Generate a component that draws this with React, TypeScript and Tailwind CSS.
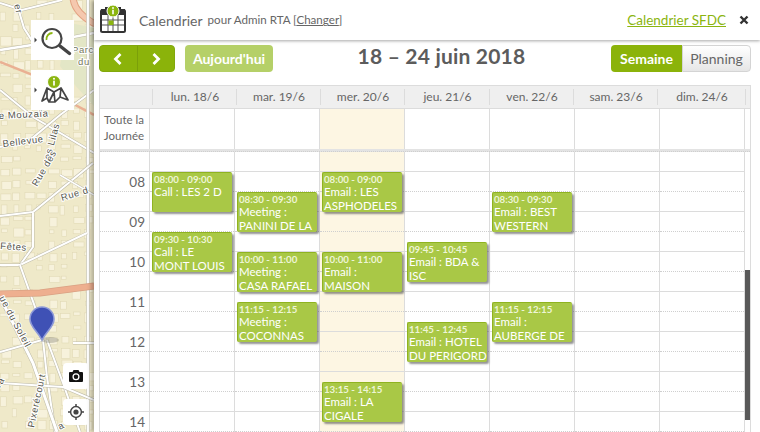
import React from "react";

const days = ["lun. 18/6", "mar. 19/6", "mer. 20/6", "jeu. 21/6", "ven. 22/6", "sam. 23/6", "dim. 24/6"];
const hours = ["08", "09", "10", "11", "12", "13", "14"];

type Ev = { t: string; a: string; b?: string; top: number };
const events: Ev[][] = [
  [
    { t: "08:00 - 09:00", a: "Call : LES 2 D", top: 20 },
    { t: "09:30 - 10:30", a: "Call : LE", b: "MONT LOUIS", top: 80 },
  ],
  [
    { t: "08:30 - 09:30", a: "Meeting :", b: "PANINI DE LA", top: 40 },
    { t: "10:00 - 11:00", a: "Meeting :", b: "CASA RAFAEL", top: 100 },
    { t: "11:15 - 12:15", a: "Meeting :", b: "COCONNAS", top: 150 },
  ],
  [
    { t: "08:00 - 09:00", a: "Email : LES", b: "ASPHODELES", top: 20 },
    { t: "10:00 - 11:00", a: "Email :", b: "MAISON", top: 100 },
    { t: "13:15 - 14:15", a: "Email : LA", b: "CIGALE", top: 230 },
  ],
  [
    { t: "09:45 - 10:45", a: "Email : BDA &", b: "ISC", top: 90 },
    { t: "11:45 - 12:45", a: "Email : HOTEL", b: "DU PERIGORD", top: 170 },
  ],
  [
    { t: "08:30 - 09:30", a: "Email : BEST", b: "WESTERN", top: 40 },
    { t: "11:15 - 12:15", a: "Email :", b: "AUBERGE DE", top: 150 },
  ],
  [],
  [],
];

function hash(a: number, b: number) {
  const x = Math.sin(a * 12.9898 + b * 78.233) * 43758.5453;
  return x - Math.floor(x);
}

function MapArt() {
  const road = (d: string, w = 3) => (
    <g key={d}>
      <path d={d} fill="none" stroke="#bdbaa8" strokeWidth={w + 1} />
      <path d={d} fill="none" stroke="#ffffff" strokeWidth={w} />
    </g>
  );
  const blocks: number[][] = [];
  for (let r = 0; r < 36; r++) {
    for (let c = 0; c < 8; c++) {
      if (hash(r, c) < 0.22) continue;
      const w = 4 + hash(c, r + 3) * 7;
      const h = 3 + hash(c + 5, r) * 7;
      blocks.push([c * 12 + hash(r + 1, c) * 2, r * 12 + hash(r, c + 2) * 2, w, h]);
    }
  }
  return (
    <svg width="94" height="432" viewBox="0 0 94 432" className="absolute inset-0">
      <rect width="94" height="432" fill="#efe9c9" />
      {blocks.map((b, i) => (
        <rect key={i} x={b[0]} y={b[1]} width={b[2]} height={b[3]} fill="#f7f2dc" stroke="#e1dab6" strokeWidth="0.6" />
      ))}
      <path d="M66 22 L94 28 L94 106 L74 84 L60 66 Z" fill="#e3e6c6" />
      <path d="M73 -2 C74 8 82 17 95 24" fill="none" stroke="#e2a283" strokeWidth="7" />
      <path d="M73 -2 C74 8 82 17 95 24" fill="none" stroke="#f5c8ae" strokeWidth="5" />
      <path d="M0 62 L33 75 L66 100 L94 115" fill="none" stroke="#eab093" strokeWidth="2.5" />
      {road("M0 50 L32 45 L94 33", 2.5)}
      {road("M0 3 L22 10 L62 0", 2)}
      {road("M18 8 L24 28 L36 47", 2)}
      {road("M0 90 L33 117 L94 153", 2)}
      {road("M0 147 L30 140 L60 115 L94 90", 2)}
      {road("M88 0 L88 432", 2.5)}
      {road("M93 163 L60 190 L33 212 L0 216", 2)}
      {road("M33 213 L33 247 L20 265", 2)}
      {road("M60 175 L94 195", 1.5)}
      {road("M0 265 L20 265 L87 233", 2)}
      {road("M20 265 L35 307 L42 340", 2)}
      {road("M43 340 L47 377 L55 432", 2)}
      {road("M47 340 L63 383 L80 432", 2)}
      {road("M0 297 L33 363 L57 432", 3)}
      {road("M42 340 L0 352", 2)}
      {road("M0 383 L63 387 L94 400", 2)}
      {road("M73 343 L94 343", 2)}
      <path d="M0 294 L40 293 L94 286" fill="none" stroke="#d9a183" strokeWidth="7" />
      <path d="M0 294 L40 293 L94 286" fill="none" stroke="#eeaf8f" strokeWidth="5.5" />
      <g fill="#55554b" fontFamily="'Liberation Sans', sans-serif" fontSize="9.5" letterSpacing="0.6" stroke="#ffffff" strokeWidth="2" paintOrder="stroke">
        <text x="-1" y="119" transform="rotate(-3 0 119)">e Mouzaïa</text>
        <text x="3" y="147" transform="rotate(-7 3 147)">Bellevue</text>
        <text x="50" y="160" transform="rotate(-75 50 160)">es Lilas</text>
        <text x="37" y="187" transform="rotate(-60 37 187)">Rue des</text>
        <text x="62" y="201" transform="rotate(-17 62 201)">Rue d</text>
        <text x="0" y="249" transform="rotate(4 0 249)">Fêtes</text>
        <text x="-1" y="298" transform="rotate(62 -1 298)">ue du Soleil</text>
        <text x="34" y="428" transform="rotate(-78 34 428)">Pixerécourt</text>
        <text x="0" y="388" transform="rotate(-60 0 388)">ra</text>
        <text x="14" y="5" transform="rotate(75 14 5)">er</text>
        <text x="60" y="430" transform="rotate(-30 60 430)">a</text>
        <text x="72" y="53" fill="#76785c">Parc</text>
        <text x="78" y="65" fill="#76785c">du</text>
      </g>
      <ellipse cx="50" cy="340" rx="9" ry="3" fill="#77776e" opacity="0.35" />
      <path d="M42 340 C37 330 30 327 30 319 A12 12 0 0 1 54 319 C54 327 47 330 42 340 Z" fill="#3f51b5" stroke="#8e9ad8" strokeWidth="1.6" />
    </svg>
  );
}

function SideButton({ children }: { children: React.ReactNode }) {
  return <div className="w-[43px] h-10 bg-white flex items-center justify-center">{children}</div>;
}

function InfoDot({ cx, cy, r }: { cx: number; cy: number; r: number }) {
  return (
    <g>
      <circle cx={cx} cy={cy} r={r} fill="#8bb50f" stroke="#ffffff" strokeWidth="1" />
      <circle cx={cx} cy={cy - r * 0.5} r={r * 0.15} fill="#fff" />
      <rect x={cx - r * 0.13} y={cy - r * 0.2} width={r * 0.26} height={r * 0.75} fill="#fff" />
    </g>
  );
}

export default function App() {
  return (
    <div className="relative flex w-[760px] h-[432px] overflow-hidden bg-white font-['Lato','Open_Sans',sans-serif] text-[#555]">
      <div className="relative w-[94px] shrink-0">
        <MapArt />
        <div className="absolute left-[31px] top-5 flex flex-col gap-2.5">
          <SideButton>
            <svg width="43" height="40" viewBox="0 0 43 40">
              <path d="M6 20 L3.5 17.5 V22.5 Z" fill="#444" />
              <circle cx="21" cy="18.5" r="9.5" fill="none" stroke="#444" strokeWidth="2.2" />
              <path d="M15.5 20 A6 6 0 0 1 21.5 13" fill="none" stroke="#8bb50f" strokeWidth="1.8" />
              <path d="M29 26 L38.5 33.5" stroke="#444" strokeWidth="3.4" strokeLinecap="round" />
            </svg>
          </SideButton>
          <SideButton>
            <svg width="43" height="40" viewBox="0 0 43 40">
              <path d="M6 20 L3.5 17.5 V22.5 Z" fill="#444" />
              <path d="M11 31 L16 18 L23 22 L30 18 L37 30 L29 27 L24 32 L18 32 L16 28 Z M16 18 L16 28 M23 22 L24 32 M23 22 L18 32 M30 18 L29 27" fill="none" stroke="#444" strokeWidth="1.7" strokeLinejoin="round" />
              <InfoDot cx={23} cy={12} r={6.5} />
            </svg>
          </SideButton>
        </div>
        <div className="absolute left-[63px] top-[363px] flex flex-col gap-2.5">
          <div className="w-[26px] h-[26px] bg-white rounded flex items-center justify-center">
            <svg width="14" height="12" viewBox="0 0 14 12">
              <path d="M0 3 Q0 2 1 2 H3.5 L4.5 0 H9.5 L10.5 2 H13 Q14 2 14 3 V11 Q14 12 13 12 H1 Q0 12 0 11 Z" fill="#111" />
              <circle cx="7" cy="6.8" r="2.9" fill="#111" stroke="#fff" strokeWidth="1.3" />
            </svg>
          </div>
          <div className="w-[26px] h-[26px] bg-white rounded flex items-center justify-center">
            <svg width="16" height="16" viewBox="0 0 16 16">
              <circle cx="8" cy="8" r="5.4" fill="none" stroke="#444" strokeWidth="1.5" />
              <circle cx="8" cy="8" r="2.6" fill="#444" />
              <path d="M8 0 V3 M8 13 V16 M0 8 H3 M13 8 H16" stroke="#444" strokeWidth="1.5" />
            </svg>
          </div>
        </div>
      </div>

      <div className="relative flex-1 min-w-0 flex flex-col bg-white shadow-[-3px_0_4px_rgba(0,0,0,0.25)]">
        <header className="h-10 shrink-0 flex items-center pl-[6px] pr-[8px] shadow-[0_1px_3px_rgba(0,0,0,0.35)]">
          <svg width="26" height="28" viewBox="0 0 26 28" className="shrink-0 -mt-0.5">
            <rect x="1" y="5" width="24" height="22" rx="1.5" fill="#fff" stroke="#333" strokeWidth="2" />
            <rect x="1" y="4" width="24" height="6" fill="#333" />
            <rect x="5" y="2" width="3" height="5" fill="#333" />
            <rect x="18" y="2" width="3" height="5" fill="#333" />
            <path d="M8 10 V26 M13 10 V26 M18 10 V26 M2 15 H24 M2 20 H24" stroke="#555" strokeWidth="1" />
            <rect x="8.5" y="15.5" width="5" height="4.5" fill="#8bb50f" />
            <InfoDot cx={13} cy={6} r={6} />
          </svg>
          <span className="ml-[13px] text-[14px] text-[#666]">Calendrier</span>
          <span className="ml-[5px] text-[11.6px] text-[#666]">
            pour Admin RTA [<span className="underline">Changer</span>]
          </span>
          <a className="ml-auto text-[13.5px] text-[#8bb50f] underline">Calendrier SFDC</a>
          <svg width="10" height="10" viewBox="0 0 10 10" className="ml-[13px] mr-[3px]">
            <path d="M1.5 1.5 L8.5 8.5 M8.5 1.5 L1.5 8.5" stroke="#333" strokeWidth="2.4" />
          </svg>
        </header>

        <div className="flex items-start h-[45px] pt-[5px] pl-[5px] pr-[9px] shrink-0">
          <div className="flex w-[76px] h-[27px] rounded bg-[#8bb30a] border border-[#82a80c]">
            <div className="flex-1 flex items-center justify-center border-r border-[#7b9f0a]">
              <svg width="10" height="12" viewBox="0 0 10 12"><path d="M7.5 1 L2.5 6 L7.5 11" fill="none" stroke="#fff" strokeWidth="2.8" /></svg>
            </div>
            <div className="flex-1 flex items-center justify-center">
              <svg width="10" height="12" viewBox="0 0 10 12"><path d="M2.5 1 L7.5 6 L2.5 11" fill="none" stroke="#fff" strokeWidth="2.8" /></svg>
            </div>
          </div>
          <div className="ml-[10px] w-[88px] h-[27px] rounded bg-[#b5d068] text-white text-[14px] font-bold flex items-center justify-center">Aujourd'hui</div>
          <div className="flex-1 -mt-[1px] text-center text-[21px] font-bold text-[#5c5c5c] leading-[24px] tracking-[0.2px] pr-[1px]">18 – 24 juin 2018</div>
          <div className="flex w-[140px] h-[27px] text-[14px]">
            <div className="w-[71px] rounded-l bg-[#8bb30a] text-white font-bold flex items-center justify-center">Semaine</div>
            <div className="w-[69px] rounded-r border border-[#d4d4d4] bg-gradient-to-b from-white to-[#e6e6e6] text-[#666] flex items-center justify-center">Planning</div>
          </div>
        </div>

        <div className="relative ml-[5px] w-[652px] flex-1 min-h-0 border-l border-r border-t border-[#dcdcdc] flex flex-col">
          <div className="grid grid-cols-[53px_84px_84px_84px_85px_84px_84px_88px] h-[23px] shrink-0 bg-[#efefef] border-b border-[#dcdcdc] text-[12px] text-[#666]">
            <div className="relative"><span className="absolute right-0 top-[3px] bottom-[3px] w-px bg-[#dcdcdc]" /></div>
            {days.map((d) => (
              <div key={d} className="relative flex items-center justify-center pb-px">
                {d}
                <span className="absolute right-0 top-[3px] bottom-[3px] w-px bg-[#dcdcdc]" />
              </div>
            ))}
          </div>
          <div className="flex h-[43px] shrink-0 border-b-[3px] border-[#e3e3e3]">
            <div className="w-[50px] shrink-0 border-r border-[#dcdcdc] text-[11.5px] leading-[16px] text-[#666] text-center pt-[3px] pr-px">
              Toute la Journée
            </div>
            {days.map((d, i) => (
              <div key={d} className={`w-[85px] shrink-0 border-r border-[#dcdcdc] ${i === 2 ? "bg-[#fdf6e3]" : ""}`} />
            ))}
          </div>
          <div className="relative flex flex-1 min-h-0 overflow-hidden border-t border-dotted border-[#cfcfcf] -mt-px">
            <div className="w-[50px] shrink-0 border-r border-[#dcdcdc]">
              <div className="h-5 border-b border-[#dcdcdc]" />
              {hours.map((h) => (
                <div key={h} className="relative h-10 flex flex-col">
                  <div className="h-5 border-b border-dotted border-[#cfcfcf]" />
                  <div className="h-5 border-b border-[#dcdcdc]" />
                  <span className="absolute right-[4px] top-[2px] text-[13.5px] leading-[16px] text-[#666]">{h}</span>
                </div>
              ))}
            </div>
            {days.map((d, i) => (
              <div key={d} className={`relative w-[85px] shrink-0 border-r border-[#dcdcdc] ${i === 2 ? "bg-[#fdf6e3]" : ""}`}>
                <div className="h-5 border-b border-[#dcdcdc]" />
                {hours.map((h) => (
                  <div key={h} className="h-10 flex flex-col">
                    <div className="h-5 border-b border-dotted border-[#cfcfcf]" />
                    <div className="h-5 border-b border-[#dcdcdc]" />
                  </div>
                ))}
                {events[i].map((e) => (
                  <div
                    key={e.t}
                    style={{ top: e.top }}
                    className="absolute left-[2px] w-[80px] h-10 overflow-hidden rounded-[2px] border-t border-l border-[#8fb320] bg-[#a9c846] pl-[1px] text-white shadow-[2px_2px_2px_rgba(60,60,60,0.55)]"
                  >
                    <div className="text-[9.7px] leading-[12px] font-bold text-[#eef5d6]">{e.t}</div>
                    <div className="text-[11.5px] leading-[14px] whitespace-nowrap">{e.a}</div>
                    {e.b && <div className="text-[11.5px] leading-[14px] whitespace-nowrap">{e.b}</div>}
                  </div>
                ))}
              </div>
            ))}
            <div className="absolute right-0 top-[118px] w-[5px] h-[150px] bg-[#595959]" />
          </div>
        </div>
      </div>
    </div>
  );
}
